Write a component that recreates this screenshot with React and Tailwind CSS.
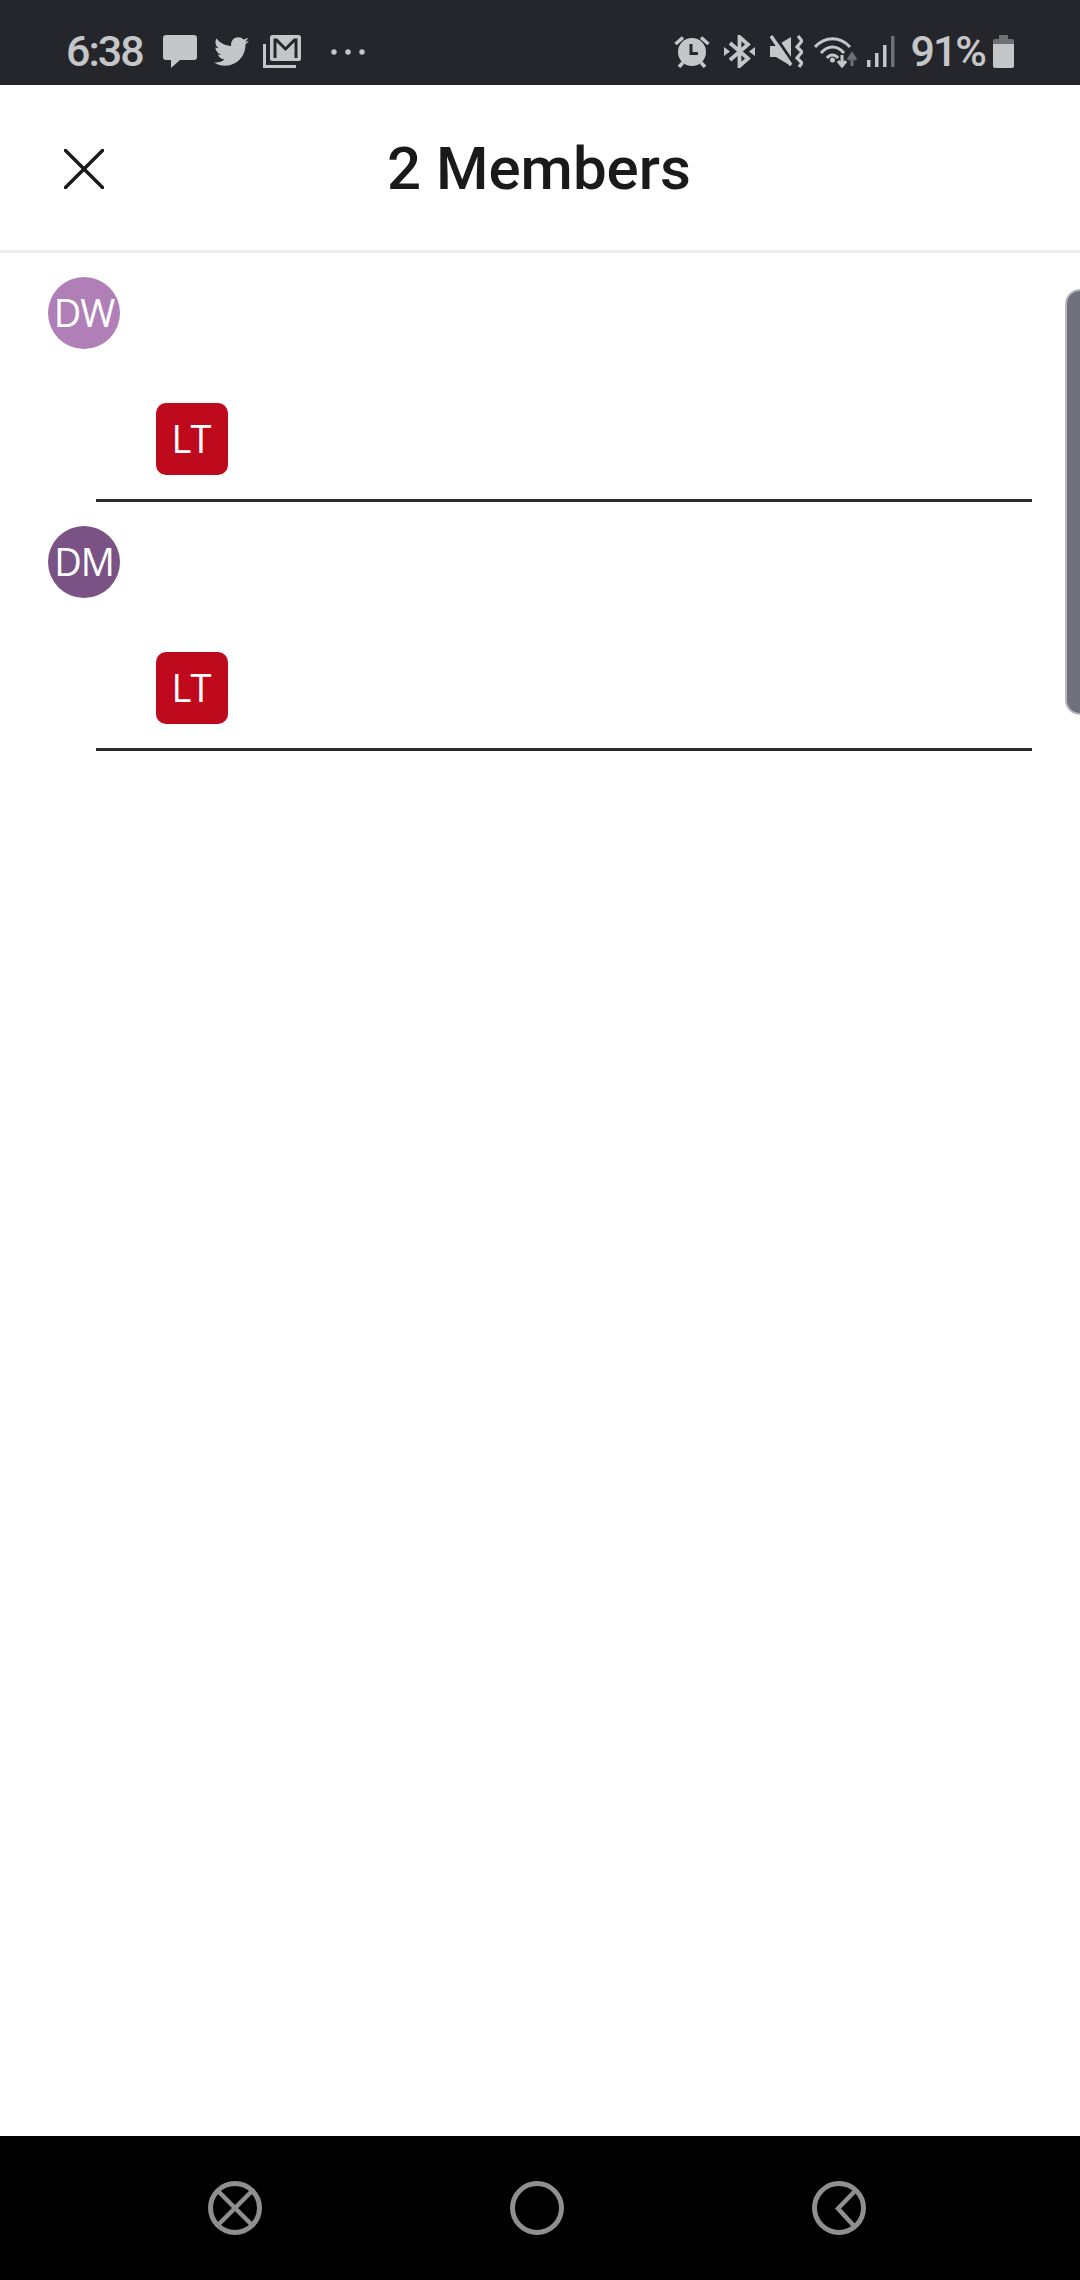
import React from "react";
import { FaTwitter } from "react-icons/fa";

const C = "#c5c6c8";

function Message() {
  return (
    <svg width="34" height="34" viewBox="0 0 34 34" className="shrink-0">
      <path d="M3 0H31A3 3 0 0 1 34 3V22A3 3 0 0 1 31 25H17L8 33V25H3A3 3 0 0 1 0 22V3A3 3 0 0 1 3 0Z" fill={C} />
    </svg>
  );
}
function Gmail() {
  return (
    <svg width="38" height="33" viewBox="0 0 38 33" className="shrink-0">
      <path d="M1.500 9V31.500H33" fill="none" stroke={C} strokeWidth="3" />
      <rect x="7" y="0" width="31" height="26" rx="2.500" fill={C} />
      <path d="M12 23V5H13.500L22.500 14L31.500 5H33V23" fill="none" stroke="#25262b" strokeWidth="3" />
    </svg>
  );
}
function Dots() {
  return (
    <svg width="35" height="6" viewBox="0 0 35 6" className="shrink-0">
      <circle cx="3" cy="3" r="2.700" fill={C} />
      <circle cx="17" cy="3" r="2.700" fill={C} />
      <circle cx="31" cy="3" r="2.700" fill={C} />
    </svg>
  );
}
function Alarm() {
  return (
    <svg width="36" height="33" viewBox="0 0 36 33" className="shrink-0">
      <circle cx="18" cy="17" r="14" fill={C} />
      <path d="M17 9V18.500H24" fill="none" stroke="#25262b" strokeWidth="3" />
      <path d="M1.500 9L9 2.500M34.500 9L27 2.500M5 32L9 27.500M31 32L27 27.500" stroke={C} strokeWidth="3.500" fill="none" />
    </svg>
  );
}
function Bluetooth() {
  return (
    <svg width="31" height="33" viewBox="0 0 31 33" className="shrink-0">
      <path d="M6 8L24 23.500L15.500 31V2L24 9.500L6 25" fill="none" stroke={C} strokeWidth="3.800" />
      <path d="M0 12L6 16.500L0 21ZM31 12L25 16.500L31 21Z" fill={C} />
    </svg>
  );
}
function Mute() {
  return (
    <svg width="33" height="33" viewBox="0 0 33 33" className="shrink-0">
      <path d="M0 11H6L21 2V31L6 22H0Z" fill={C} />
      <path d="M3 -2L24 29" stroke="#25262b" strokeWidth="3" />
      <path d="M1 1L21 30" stroke={C} strokeWidth="3.500" />
      <path d="M28 1L32 6L27 12L32 17L27 23L32 28L29 32" fill="none" stroke={C} strokeWidth="3.200" />
    </svg>
  );
}
function Wifi() {
  return (
    <svg width="44" height="33" viewBox="0 0 44 33" className="shrink-0">
      <path d="M1 12C11 1 26 1 36 12" fill="none" stroke={C} strokeWidth="3" />
      <path d="M7 18C14 10 23 10 30 18" fill="none" stroke={C} strokeWidth="3" />
      <path d="M13 23C16 19 21 19 24 23" fill="none" stroke={C} strokeWidth="3" />
      <circle cx="18.500" cy="25" r="2.500" fill={C} />
      <path d="M28 20V30M24 26L28 31L32 26" fill="none" stroke={C} strokeWidth="3" />
      <path d="M38 31V21M34 25L38 19L42 25" fill="none" stroke="#6f7073" strokeWidth="3" />
    </svg>
  );
}
function Signal() {
  return (
    <svg width="28" height="31" viewBox="0 0 28 31" className="shrink-0">
      <rect x="0" y="24" width="3.500" height="7" fill={C} />
      <rect x="8" y="17" width="3.500" height="14" fill={C} />
      <rect x="16" y="9" width="3.500" height="22" fill={C} />
      <rect x="24" y="0" width="3.500" height="31" fill="#6f7073" />
    </svg>
  );
}
function Battery() {
  return (
    <svg width="21" height="33" viewBox="0 0 21 33" className="shrink-0">
      <path d="M6 0H15V4H19A2 2 0 0 1 21 6V9H0V6A2 2 0 0 1 2 4H6Z" fill="#6f7073" />
      <path d="M0 9H21V31A2 2 0 0 1 19 33H2A2 2 0 0 1 0 31Z" fill={C} />
    </svg>
  );
}

function NavX() {
  return (
    <svg width="54" height="54" viewBox="0 0 54 54">
      <circle cx="27" cy="27" r="24.500" fill="none" stroke="#8f8f8f" strokeWidth="5" />
      <path d="M10 10L44 44M44 10L10 44" stroke="#8f8f8f" strokeWidth="4.500" />
    </svg>
  );
}
function NavO() {
  return (
    <svg width="54" height="54" viewBox="0 0 54 54">
      <circle cx="27" cy="27" r="24.500" fill="none" stroke="#8f8f8f" strokeWidth="5" />
    </svg>
  );
}
function NavBack() {
  return (
    <svg width="54" height="54" viewBox="0 0 54 54">
      <circle cx="27" cy="27" r="24.500" fill="none" stroke="#8f8f8f" strokeWidth="5" />
      <path d="M43 10L26 27.500L42 45" fill="none" stroke="#8f8f8f" strokeWidth="4.500" />
    </svg>
  );
}

function Member({ initials, color }) {
  return (
    <div className="flex flex-col">
      <div
        className="ml-[48px] mt-[24px] flex h-[72px] w-[72px] items-center justify-center rounded-full pb-[2px] text-[38px] leading-none tracking-[-1px] text-white"
        style={{ backgroundColor: color }}
      >
        {initials}
      </div>
      <div className="ml-[156px] mt-[54px] flex h-[72px] w-[72px] items-center justify-center rounded-[10px] bg-[#bf0a1e] pb-[2px] pr-[2px] text-[38px] leading-none tracking-[-1px] text-white">
        LT
      </div>
      <div className="ml-[96px] mt-[24px] h-[3px] w-[936px] bg-[#2b2b2b]" />
    </div>
  );
}

export default function App() {
  return (
    <div className="relative flex h-[2280px] w-[1080px] flex-col overflow-hidden bg-white font-['Open_Sans',sans-serif]">
      <div className="flex h-[85px] shrink-0 items-center bg-[#25262b] pt-[18px] font-['Roboto',sans-serif] text-[#c5c6c8]">
        <span className="ml-[66px] w-[78px] text-[43px] font-medium leading-none tracking-[-2px]">6:38</span>
        <div className="ml-[19px] flex items-center">
          <Message />
          <FaTwitter className="ml-[17px] shrink-0" size={35} color={C} />
          <div className="ml-[14px]"><Gmail /></div>
          <div className="ml-[30px]"><Dots /></div>
        </div>
        <div className="ml-auto mr-[66px] flex items-center">
          <Alarm />
          <div className="ml-[14px]"><Bluetooth /></div>
          <div className="ml-[15px]"><Mute /></div>
          <div className="ml-[11px]"><Wifi /></div>
          <div className="ml-[9px]"><Signal /></div>
          <span className="ml-[15px] text-[43px] font-medium leading-none tracking-[-2px]">91%</span>
          <div className="ml-[8px]"><Battery /></div>
        </div>
      </div>

      <div className="flex h-[168px] shrink-0 items-center border-b-[3px] border-[#eeeeee] pl-[64px] pt-[2px]">
        <svg width="40" height="40" viewBox="0 0 40 40" className="shrink-0">
          <path d="M1.500 1.500L38.500 38.500M38.500 1.500L1.500 38.500" stroke="#1a1a1a" strokeWidth="3.500" strokeLinecap="round" />
        </svg>
        <h1 className="ml-[283px] font-['Roboto',sans-serif] text-[60px] font-medium leading-none text-[#1a1a1a]">2 Members</h1>
      </div>

      <div className="flex-1">
        <Member initials="DW" color="#b07fb8" />
        <Member initials="DM" color="#7a5285" />
      </div>

      <div className="flex h-[144px] shrink-0 items-center gap-[248px] bg-black pl-[208px]">
        <NavX />
        <NavO />
        <NavBack />
      </div>

      <div className="absolute left-[1065px] top-[289px] h-[426px] w-[15px] rounded-l-[16px] border-y-2 border-l-2 border-[#b8b8bc] bg-[#706f7c]" />
    </div>
  );
}
